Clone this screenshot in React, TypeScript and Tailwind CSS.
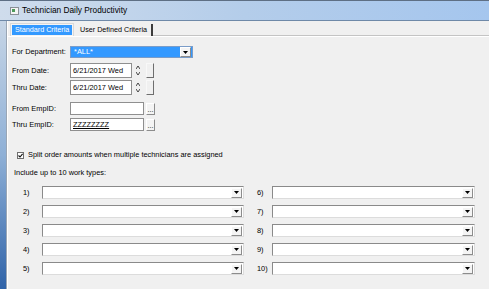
import React from "react";

function DropButton({ className = "" }: { className?: string }) {
  return (
    <div
      className={`flex items-center justify-center bg-[#f4f4f4] border border-t-white border-l-white border-r-[#8c8c8c] border-b-[#8c8c8c] ${className}`}
    >
      <svg width="5" height="3" viewBox="0 0 5 3">
        <path d="M0 0 L5 0 L2.5 3 Z" fill="#000" />
      </svg>
    </div>
  );
}

function Combo({ width }: { width: number }) {
  return (
    <div
      className="h-[13px] bg-white border border-t-[#8a8a8a] border-l-[#8a8a8a] border-r-[#dcdcdc] border-b-[#dcdcdc] flex items-center justify-end pr-[1px]"
      style={{ width }}
    >
      <DropButton className="w-[11px] h-[10px]" />
    </div>
  );
}

function TextBox({ width, height, children }: { width: number; height: number; children?: React.ReactNode }) {
  return (
    <div
      className="bg-white border border-[#8f8f8f] flex items-center pl-[2px] text-black"
      style={{ width, height }}
    >
      {children}
    </div>
  );
}

function Spinner() {
  return (
    <div className="w-[8px] h-[15px] flex flex-col items-center justify-center gap-[3px] ml-[2px]">
      <svg width="4" height="3" viewBox="0 0 4 3">
        <path d="M0 3 L2 0 L4 3" fill="none" stroke="#333" strokeWidth="0.9" />
      </svg>
      <svg width="4" height="3" viewBox="0 0 4 3">
        <path d="M0 0 L2 3 L4 0" fill="none" stroke="#333" strokeWidth="0.9" />
      </svg>
    </div>
  );
}

function EllipsisButton() {
  return (
    <div className="ml-[2px] w-[9px] h-[12px] bg-[#f4f4f4] border border-t-white border-l-white border-r-[#8c8c8c] border-b-[#8c8c8c] flex items-end justify-center leading-none text-[7px] pb-[1px]">
      ...
    </div>
  );
}

function Label({ children }: { children: React.ReactNode }) {
  return <div className="w-[58px] shrink-0 text-black">{children}</div>;
}

export default function App() {
  const left = ["1)", "2)", "3)", "4)", "5)"];
  const right = ["6)", "7)", "8)", "9)", "10)"];

  return (
    <div className="w-[489px] h-[289px] overflow-hidden flex flex-col bg-[#f0f0f0] font-['Liberation_Sans',Arial,sans-serif] text-[7.4px] leading-none text-black">
      {/* Title bar */}
      <div className="h-[21px] shrink-0 flex items-center border-t border-t-[#5e6f84] border-b border-b-[#6f89a8] bg-gradient-to-r from-[#cfdcec] via-[#b4cdea] to-[#a5c6ee]">
        <div className="ml-[10px] w-[9px] h-[8px] border border-[#8a8f96] bg-[#f4f4f4] flex items-start p-[1px]">
          <div className="w-[3px] h-[3px] bg-[#4e9a5a]" />
        </div>
        <div className="ml-[3px] text-[8.3px] text-black">Technician Daily Productivity</div>
      </div>

      <div className="flex flex-1">
        {/* Left window frame */}
        <div className="w-[6px] shrink-0 bg-gradient-to-b from-[#c6d5e6] via-[#8fb0d6] to-[#2f63a8]" />
        <div className="w-px shrink-0 bg-[#9aa6b4]" />
        <div className="w-px shrink-0 bg-white" />

        <div className="flex-1 flex flex-col">
          {/* Tabs */}
          <div className="h-[15px] shrink-0 flex items-end pl-[2px]">
            <div className="h-[13px] w-[64px] border border-b-0 border-[#d8d8d8] bg-[#f4f4f4] p-[1px]">
              <div className="h-full bg-[#3399ff] text-white flex items-center pl-[3px] text-[7.2px]">
                Standard Criteria
              </div>
            </div>
            <div className="h-[12px] w-[79px] border-r-2 border-r-[#3c3c3c] bg-[#f0f0f0] flex items-center pl-[6px] text-[7.2px]">
              User Defined Criteria
            </div>
            <div className="flex-1 h-px bg-[#c4c4c4]" />
          </div>
          <div className="h-px shrink-0 bg-white" />

          {/* Form */}
          <div className="flex flex-col pl-[4px]">
            <div className="flex items-center mt-[9px] h-[12px]">
              <Label>For Department:</Label>
              <div className="w-[123px] h-[12px] bg-[#3399ff] border border-[#7a9cc8] flex items-center justify-between pl-[3px] pr-[1px] text-white">
                <span>*ALL*</span>
                <DropButton className="w-[11px] h-[10px]" />
              </div>
            </div>

            <div className="flex items-center mt-[5px]">
              <Label>From Date:</Label>
              <TextBox width={62} height={15}>6/21/2017 Wed</TextBox>
              <Spinner />
              <div className="ml-[4px] w-[8px] h-[15px] bg-[#f0f0f0] border border-t-[#f8f8f8] border-l-[#f8f8f8] border-r-[#6e6e6e] border-b-[#6e6e6e]" />
            </div>

            <div className="flex items-center mt-[2px]">
              <Label>Thru Date:</Label>
              <TextBox width={62} height={15}>6/21/2017 Wed</TextBox>
              <Spinner />
              <div className="ml-[4px] w-[8px] h-[15px] bg-[#f0f0f0] border border-t-[#f8f8f8] border-l-[#f8f8f8] border-r-[#6e6e6e] border-b-[#6e6e6e]" />
            </div>

            <div className="flex items-center mt-[7px]">
              <Label>From EmpID:</Label>
              <TextBox width={74} height={13} />
              <EllipsisButton />
            </div>

            <div className="flex items-center mt-[3px]">
              <Label>Thru EmpID:</Label>
              <TextBox width={74} height={13}>
                <span className="underline">ZZZZZZZZ</span>
              </TextBox>
              <EllipsisButton />
            </div>

            <div className="flex items-center mt-[19px] h-[10px] pl-[5px]">
              <svg width="7" height="7" viewBox="0 0 7 7">
                <rect x="0.5" y="0.5" width="6" height="6" fill="#fff" stroke="#6f6f6f" />
                <path d="M1.5 3.5 L3 5 L5.6 1.8" fill="none" stroke="#111" strokeWidth="1.1" />
              </svg>
              <span className="ml-[4px]">Split order amounts when multiple technicians are assigned</span>
            </div>

            <div className="mt-[8px] h-[10px] flex items-center pl-[2px]">Include up to 10 work types:</div>

            <div className="mt-[8px] flex pl-[11px]">
              <div className="flex flex-col gap-[6px]">
                {left.map((l) => (
                  <div key={l} className="flex items-center">
                    <div className="w-[19px] shrink-0">{l}</div>
                    <Combo width={202} />
                  </div>
                ))}
              </div>
              <div className="flex flex-col gap-[6px] ml-[13px]">
                {right.map((l) => (
                  <div key={l} className="flex items-center">
                    <div className="w-[15px] shrink-0">{l}</div>
                    <Combo width={203} />
                  </div>
                ))}
              </div>
            </div>
          </div>
        </div>
      </div>
    </div>
  );
}
